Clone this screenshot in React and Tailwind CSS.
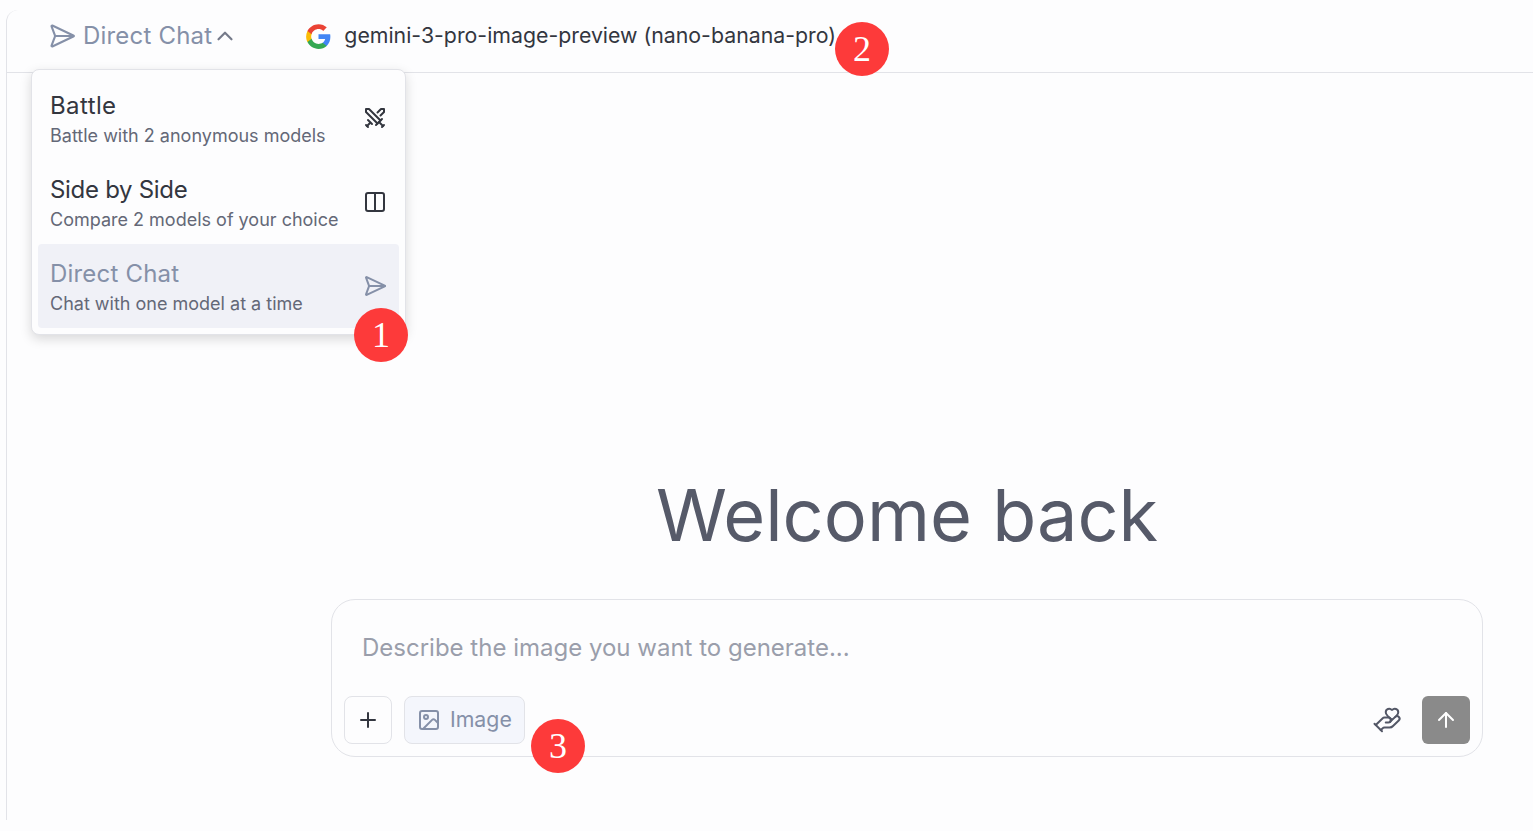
import React from "react";
import { SendHorizontal, ChevronUp, Swords, Columns2, Plus, Image as ImageIcon, HandHeart, ArrowUp } from "lucide-react";

function GoogleG({ className }) {
  return (
    <svg viewBox="0 0 24 24" className={className}>
      <path fill="#4285F4" d="M22.56 12.25c0-.78-.07-1.53-.2-2.25H12v4.26h5.92c-.26 1.37-1.04 2.53-2.21 3.31v2.77h3.57c2.08-1.92 3.28-4.74 3.28-8.09z" />
      <path fill="#34A853" d="M12 23c2.97 0 5.46-.98 7.28-2.66l-3.57-2.77c-.98.66-2.23 1.06-3.71 1.06-2.86 0-5.29-1.93-6.16-4.53H2.18v2.84C3.99 20.53 7.7 23 12 23z" />
      <path fill="#FBBC05" d="M5.84 14.09c-.22-.66-.35-1.36-.35-2.09s.13-1.43.35-2.09V7.07H2.18C1.43 8.55 1 10.22 1 12s.43 3.45 1.18 4.93l3.66-2.84z" />
      <path fill="#EA4335" d="M12 5.38c1.62 0 3.06.56 4.21 1.64l3.15-3.15C17.45 2.09 14.97 1 12 1 7.7 1 3.99 3.47 2.18 7.07l3.66 2.84c.87-2.6 3.3-4.53 6.16-4.53z" />
    </svg>
  );
}

function Marker({ n, className }) {
  return (
    <div className={"absolute w-[54px] h-[54px] rounded-full bg-[#fd3a3a] flex items-center justify-center text-white text-[36px] leading-none font-['Liberation_Serif',serif] " + className}>
      {n}
    </div>
  );
}

function MenuItem({ title, sub, icon, active, track }) {
  return (
    <div className={"h-[84px] rounded-[4px] pl-3 pr-3 flex items-center justify-between " + (active ? "bg-[#f0f1f7]" : "")}>
      <div className="flex flex-col pt-[1px]">
        <div className={"text-[24px] leading-[33px] " + track + " " + (active ? "text-[#8590a8]" : "text-[#33363f]")}>{title}</div>
        <div className="text-[18px] leading-[27px] text-[#646877]">{sub}</div>
      </div>
      {icon}
    </div>
  );
}

export default function App() {
  return (
    <div className="relative h-[831px] w-[1533px] overflow-hidden bg-[#fdfdfe] pl-[6px] pt-[10px] font-['Inter',sans-serif]">
      <div className="h-[810px] rounded-tl-[12px] border-l border-[#e2e3e8] flex flex-col">
        <header className="h-[63px] shrink-0 border-b border-[#e2e3e8] flex items-center pb-[10px] pl-[41px]">
          <SendHorizontal className="w-[28px] h-[28px] text-[#8590a8]" strokeWidth={1.8} />
          <span className="ml-[7px] text-[24px] tracking-[0.2px] text-[#8590a8]">Direct Chat</span>
          <ChevronUp className="w-[26px] h-[26px] text-[#757a8a]" strokeWidth={2} />
          <GoogleG className="ml-[67px] w-[27px] h-[27px]" />
          <span className="ml-[12px] text-[21.3px] text-[#33363f]">gemini-3-pro-image-preview (nano-banana-pro)</span>
        </header>
        <main className="flex-1 flex flex-col items-end pr-[50px]">
          <div className="w-[1152px] flex flex-col items-center">
            <h1 className="mt-[394px] text-[72px] leading-[96px] font-normal text-[#565a69]">Welcome back</h1>
            <div className="mt-[36px] w-full h-[158px] rounded-[24px] border border-[#e2e3e8] bg-[#fdfdfe] flex flex-col">
              <div className="pt-[32px] pl-[30px] text-[24px] leading-[32px] text-[#9a9eab]">Describe the image you want to generate...</div>
              <div className="mt-auto mb-[12px] px-[12px] flex items-center">
                <button className="w-[48px] h-[48px] rounded-[8px] border border-[#e2e3e8] bg-[#fdfdfe] flex items-center justify-center">
                  <Plus className="w-[24px] h-[24px] text-[#33363f]" strokeWidth={2} />
                </button>
                <button className="ml-[12px] w-[121px] h-[48px] rounded-[8px] border border-[#e2e3e8] bg-[#f4f6fc] flex items-center pl-[12px] gap-[9px] text-[#8590a8]">
                  <ImageIcon className="w-[24px] h-[24px]" strokeWidth={2} />
                  <span className="text-[21.3px]">Image</span>
                </button>
                <HandHeart className="ml-auto w-[30px] h-[30px] text-[#535766]" strokeWidth={1.6} />
                <button className="ml-[20px] w-[48px] h-[48px] rounded-[6px] bg-[#8a8a8a] flex items-center justify-center">
                  <ArrowUp className="w-[24px] h-[24px] text-white" strokeWidth={2} />
                </button>
              </div>
            </div>
          </div>
        </main>
      </div>

      <div className="absolute left-[31px] top-[69px] w-[375px] h-[266px] rounded-[8px] border border-[#e2e3e8] bg-[#fdfdfe] shadow-[0_4px_12px_rgba(0,0,0,0.15)] p-[6px]">
        <MenuItem title="Battle" track="tracking-[0.4px]" sub="Battle with 2 anonymous models" icon={<Swords className="w-[24px] h-[24px] text-[#33363f]" strokeWidth={2} />} />
        <MenuItem title="Side by Side" track="tracking-[-0.3px]" sub="Compare 2 models of your choice" icon={<Columns2 className="w-[24px] h-[24px] text-[#33363f]" strokeWidth={2} />} />
        <MenuItem active title="Direct Chat" track="tracking-[0.2px]" sub="Chat with one model at a time" icon={<SendHorizontal className="w-[24px] h-[24px] text-[#8590a8]" strokeWidth={2} />} />
      </div>

      <Marker n="1" className="left-[354px] top-[308px]" />
      <Marker n="2" className="left-[835px] top-[22px]" />
      <Marker n="3" className="left-[531px] top-[719px]" />
    </div>
  );
}
